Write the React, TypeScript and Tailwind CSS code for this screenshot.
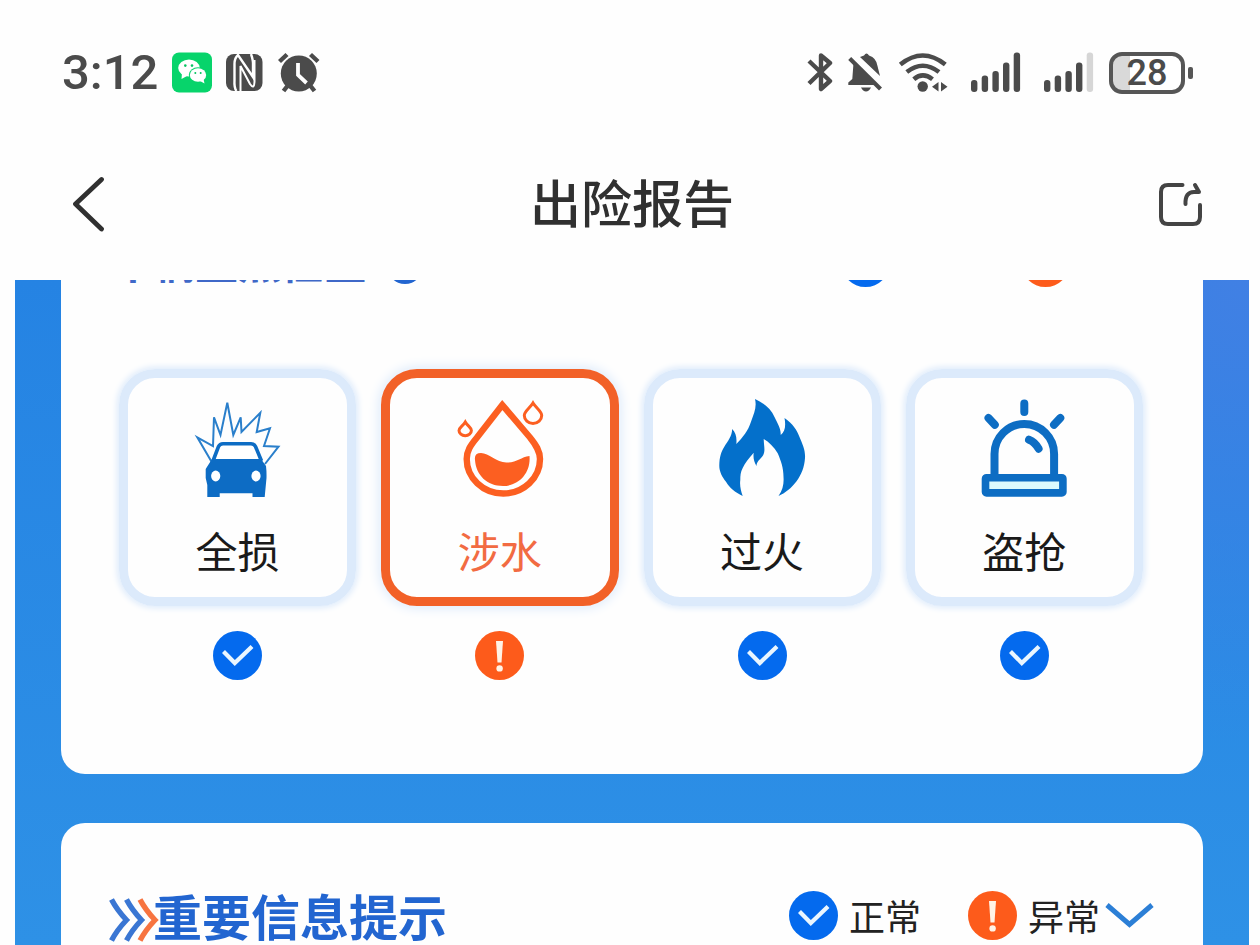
import type { ReactNode } from 'react';

const CrashIcon = () => (
  <svg width="86" height="98" viewBox="0 0 86 98" fill="none" className="overflow-visible">
    <path
      d="M16.7 62 2.3 37.3 18 46 19 17.3 25.5 35 32.3 2.7 38.3 35 45.7 17.3 46.5 32 65.3 12.7 61.7 32 75 28.3 69 46 83.5 46.7 70 64"
      stroke="#2a7fcb"
      strokeWidth="2"
    />
    <path d="M18 61 23.5 46.5Q24.8 43.7 28 43.7H56Q59 43.7 60.5 46.5L66.5 61" fill="#fff" stroke="#0d6cc4" strokeWidth="3.6" />
    <path
      d="M17 59H66L71 66Q71.7 72 71.5 78L69.7 97H57.5V93.3H24.7V97H12.3V85L10.7 78V69Z"
      fill="#0d6cc4"
    />
    <ellipse cx="20.7" cy="76" rx="4.6" ry="5.4" fill="#fff" />
    <ellipse cx="61" cy="76" rx="4.6" ry="5.4" fill="#fff" />
  </svg>
);

const WaterIcon = () => (
  <svg width="86" height="98" viewBox="0 0 86 98" fill="none" stroke="#fc5f21" className="overflow-visible">
    <path d="M45.3 5 20 37.5C13 46 9.7 51 9.7 59 9.7 78 26 93.5 46.3 93.5S83 78 83 59C83 51 79 45 73 37.5Z" strokeWidth="6.4" />
    <path d="M18 60Q17 53 24 53C32 53 40 63 50 62.5 60 62.5 64 57 72.5 56 74 73 62 86 46 86S19 75 18 60Z" fill="#fc5f21" stroke="none" />
    <path d="M76 3C73 8 67.3 11 67.3 15.5A8.7 8 0 0 0 84.7 15.5C84.7 11 79 8 76 3Z" strokeWidth="3" />
    <path d="M8.3 22C6 26 2 27.5 2 30.5A6 5 0 0 0 14.4 30.5C14.4 27.5 10.5 26 8.3 22Z" strokeWidth="3" />
  </svg>
);

const FireIcon = () => (
  <svg width="86" height="98" viewBox="0 0 86 98" className="overflow-visible">
    <path
      d="M36-1C45 3 52 9 55.5 17 59 24 62 29 61.7 35 66 32 67 26 65.5 18 74 24 78 30 80.5 37 84 45 86.5 51 86 58 85 76 73 90 59.5 96 64 90 65 83 64.5 77 64.5 68 62 61 58.7 53.3 55 47 50 42 44.7 39 45 47 46.5 51 44 55.5 41 60 37.5 61 37.5 66 35 62 34 58 34.7 52.7 30 58 26 63 23.7 68 21.5 72 21.3 76 21.3 80 20.5 86 22 91 23.7 96 16 92 10.5 88 7 81.7 3 77 0 71 .3 65 .5 57 2 52 5.3 46.7 9 41 13 36 13.2 29 17 33 18 38 17.3 44 24 37 29 31 32 21.7 35 13 38 7 36-1Z"
      fill="#0470cb"
    />
  </svg>
);

const TheftIcon = () => (
  <svg width="86" height="98" viewBox="0 0 86 98" fill="none" stroke="#0d6dc3" strokeWidth="8" className="overflow-visible">
    <path d="M13.5 76V54a29.8 30 0 0 1 59.6 0V76" />
    <rect x="4.5" y="77.7" width="77.4" height="15.2" rx="1" fill="#dcfafd" strokeWidth="7.6" />
    <path d="M43.3 3.5V12M7.5 18l6.3 6.8M79.3 18 73 24.8" strokeLinecap="round" />
    <path d="M48 39.7Q54 42 57.6 48.7" strokeLinecap="round" />
  </svg>
);

const StatusBadge = ({ ok }: { ok: boolean }) => (
  <svg width="49" height="49" viewBox="0 0 49 49" fill="none" className="shrink-0" role="img" aria-label={ok ? '正常' : '异常'}>
    <circle cx="24.5" cy="24.5" r="24.5" fill={ok ? '#046aee' : '#fd5b1b'} />
    {ok ? (
      <path d="M10.5 20.5 21.8 32 39 15.5" stroke="#eaf6ff" strokeWidth="4.2" />
    ) : (
      <>
        <path d="M21 10H28L26.5 31.5H22.5Z" fill="#fff3e6" />
        <circle cx="24.6" cy="37.4" r="3.2" fill="#fff3e6" />
      </>
    )}
  </svg>
);

const TitleArrows = () => (
  <svg width="44" height="46" viewBox="0 0 44 46" fill="none" strokeWidth="5.4" className="shrink-0 self-end overflow-visible">
    <path d="M2.5 2.5Q8 13 17.5 23 8 33 2.5 43.5M17.5 2.5Q23 13 32.5 23 23 33 17.5 43.5" stroke="#3a76d3" />
    <path d="M31 2.5Q36.5 13 46 23 36.5 33 31 43.5" stroke="#f77440" />
  </svg>
);

const SignalBars = ({ weak = false }: { weak?: boolean }) => (
  <svg width="50" height="42" viewBox="0 0 50 42" fill="#4b4b4b">
    <rect x="0" y="28" width="6.4" height="12" rx="3" />
    <rect x="10.7" y="23.5" width="6.4" height="16.5" rx="3" />
    <rect x="21.4" y="19" width="6.4" height="21" rx="3" />
    <rect x="32" y="10.5" width="6.4" height="29.5" rx="3" />
    <rect x="42.7" y="0.5" width="6.4" height="39.5" rx="3" fill={weak ? '#d6d6d6' : '#4b4b4b'} />
  </svg>
);

const StatusBar = () => (
  <div className="flex h-[146px] items-center justify-between pr-[67px] pl-[62px] text-[#4b4b4b]">
    <div className="flex items-center">
      <span className="w-[110px] font-['Roboto',sans-serif] text-[49px] leading-[50px] font-medium">3:12</span>
      <svg width="40" height="42" viewBox="0 0 40 42" className="mr-[14px]">
        <rect y="0.5" width="40" height="40" rx="7" fill="#07d46b" />
        <ellipse cx="17" cy="16" rx="10.8" ry="8.6" fill="#fff" />
        <path d="M10 21 9.5 27 15 24Z" fill="#fff" />
        <ellipse cx="26" cy="23" rx="9.2" ry="7.8" fill="#07d46b" />
        <ellipse cx="26" cy="23" rx="8.2" ry="6.8" fill="#fff" />
        <path d="M28 29 32.5 31.5 31.5 27Z" fill="#fff" />
        <g fill="#07c462">
          <circle cx="13.3" cy="13.6" r="1.3" />
          <circle cx="20" cy="13.6" r="1.3" />
          <circle cx="23.3" cy="21" r="1" />
          <circle cx="28.7" cy="21" r="1" />
        </g>
      </svg>
      <svg width="37" height="42" viewBox="0 0 37 42" fill="none" className="mr-[15px]">
        <rect y="2" width="36.5" height="37" rx="8" fill="#4b4b4b" />
        <path d="M10.5 39Q8 36 8.5 28V12Q8.5 6 12 3L27 25V14Q27.5 9 25 2" stroke="#fff" strokeWidth="2.4" />
        <path d="M14.5 39V14L24 32Q28 38 28.5 30V8" stroke="#fff" strokeWidth="2" />
      </svg>
      <svg width="42" height="42" viewBox="0 0 42 42" fill="none" strokeWidth="4.4">
        <path d="M1.5 9.5 9 2.5M32.5 2.5 40 9.5M5.5 39 11 32M36.5 39 31 32" stroke="#4b4b4b" />
        <circle cx="20.8" cy="21.5" r="18" fill="#4b4b4b" />
        <path d="M20 11V23L28.5 31" stroke="#fff" strokeWidth="3.8" />
      </svg>
    </div>

    <div className="flex items-center">
      <svg width="26" height="42" viewBox="0 0 26 42" fill="none" className="mr-[15px]">
        <path d="M2 9 23 29 14 37V3.5L23 11 2 31.5" stroke="#4b4b4b" strokeWidth="4.4" strokeLinejoin="round" />
      </svg>
      <svg width="34" height="42" viewBox="0 0 34 42" fill="#4b4b4b" className="mr-[16px]">
        <path d="M5.5 11 27 33H.3V30.5L4.3 27Z" />
        <path d="M12 5 16 3.5Q18.5-.5 21 3.5 28.5 6 29.5 14L32 24Z" />
        <path d="M1.7 6.5 32.5 37" stroke="#4b4b4b" strokeWidth="4.2" />
        <path d="M13 35.5H23Q21 39.5 18 39.5T13 35.5Z" />
      </svg>
      <svg width="50" height="42" viewBox="0 0 50 42" fill="none" className="mr-[23px]">
        <path d="M2.3 12.5Q24.7-5.5 47.3 12.5M8.8 20Q24.7 7.5 41 20M15.8 27.2Q24.7 19.5 34.5 27.2" stroke="#4b4b4b" strokeWidth="4.6" />
        <circle cx="24.7" cy="34.5" r="5.2" fill="#4b4b4b" />
        <path d="M40.5 30V39.5L34 34.7ZM43 30V39.5L49.5 34.7Z" fill="#4b4b4b" />
      </svg>
      <div className="mr-[15px] flex gap-[23px]">
        <SignalBars />
        <SignalBars weak />
      </div>
      <div className="flex items-center gap-[3px]">
        <span className="flex h-[42px] w-[76px] items-center justify-center rounded-[13px] border-4 border-[#565656] bg-linear-to-r from-[#d9d9d9] from-25% to-white to-25% font-['Roboto',sans-serif] text-[36px] leading-[36px] font-medium">
          28
        </span>
        <span className="h-[12px] w-[5px] rounded-[2px] bg-[#565656]" />
      </div>
    </div>
  </div>
);

interface LegendProps {
  children?: ReactNode;
}

const Legend = ({ children }: LegendProps) => (
  <div className="flex items-center text-[36px] leading-[49px] text-[#222]">
    <StatusBadge ok />
    <span className="mr-[47px] ml-[11px]">正常</span>
    <StatusBadge ok={false} />
    <span className="ml-[11px]">异常</span>
    {children}
  </div>
);

const checks = [
  { name: '全损', icon: <CrashIcon />, ok: true },
  { name: '涉水', icon: <WaterIcon />, ok: false },
  { name: '过火', icon: <FireIcon />, ok: true },
  { name: '盗抢', icon: <TheftIcon />, ok: true },
];

const App = () => {
  return (
    <div className="flex h-screen flex-col overflow-hidden bg-[#fefefe] font-['Noto_Sans_CJK_SC',sans-serif]">
      <header className="shrink-0">
        <StatusBar />
        <nav className="flex h-[134px] items-start justify-between pt-[30px] pr-[56px] pl-[70px] text-[#303030]">
          <button type="button" aria-label="返回" className="flex h-[56px] w-[36px] items-center">
            <svg width="36" height="56" viewBox="0 0 36 56" fill="none">
              <path d="M31.5 3.5 5.5 28 31.5 53" stroke="#303030" strokeWidth="4.8" strokeLinecap="round" strokeLinejoin="round" />
            </svg>
          </button>
          <h1 className="text-[51px] leading-[50px] font-medium">出险报告</h1>
          <button type="button" aria-label="分享" className="flex h-[56px] w-[46px] items-center">
            <svg width="46" height="46" viewBox="0 0 46 46" fill="none" stroke="#444" strokeWidth="4" strokeLinecap="round">
              <path d="M24.5 4H10Q3 4 3 11V36Q3 43 10 43H35Q42 43 42 36V24" />
              <path d="M27.5 23Q27 11 36 11H41L37 4" strokeLinejoin="round" />
            </svg>
          </button>
        </nav>
      </header>

      <main className="mr-[11px] ml-[15px] flex min-h-0 flex-1 flex-col gap-[49px] overflow-hidden bg-[radial-gradient(500px_460px_at_100%_0,#4180e4,transparent),linear-gradient(#2583e3,#2e91e6)] px-[46px]">
        {/* first card is scrolled under the header */}
        <section className="-mt-[112px] h-[606px] shrink-0 rounded-[24px] bg-[#fefefe] pt-[70px]">
          <div className="flex h-[49px] items-start justify-between pr-[133px] pl-[48px]">
            <h2 className="flex items-start gap-[20px] text-[43px] leading-[45px] font-bold text-[#3f68c8]">
              车辆重点检查
              <span className="mt-[10px] size-[36px] rounded-full bg-[#2265d0]" />
            </h2>
            <div className="flex gap-[131px]">
              <StatusBadge ok />
              <StatusBadge ok={false} />
            </div>
          </div>
          <ul className="mt-[82px] grid grid-cols-4 gap-[25px] pr-[60px] pl-[58px]">
            {checks.map((item) => (
              <li key={item.name} className="flex flex-col items-center gap-[25px]">
                <div
                  className={`flex h-[237px] w-full flex-col items-center rounded-[36px] border-[9px] pt-[22px] ${item.ok
                    ? 'border-[#dceafb] text-[#1a1a1a] shadow-[0_0_6px_2px_#dceafb]'
                    : 'border-[#f26128] text-[#f26b42] shadow-[0_0_12px_2px_#dceafb]'
                    }`}
                >
                  {item.icon}
                  <span className="mt-[22px] text-[42px] leading-[60px]">{item.name}</span>
                </div>
                <StatusBadge ok={item.ok} />
              </li>
            ))}
          </ul>
        </section>

        <section className="h-[300px] shrink-0 rounded-[24px] bg-[#fefefe] pt-[64px]">
          <div className="flex items-center justify-between pr-[49px] pl-[48px]">
            <h2 className="flex items-center text-[49px] leading-[56px] font-bold text-[#2265d0]">
              <TitleArrows />
              重要信息提示
            </h2>
            <Legend>
              <button type="button" aria-label="展开" className="ml-[5px]">
                <svg width="49" height="49" viewBox="0 0 49 49" fill="none">
                  <path d="M2 14 24.5 33.5 47 14" stroke="#2c7fd6" strokeWidth="5" />
                </svg>
              </button>
            </Legend>
          </div>
        </section>
      </main>
    </div>
  );
};

export default App;
